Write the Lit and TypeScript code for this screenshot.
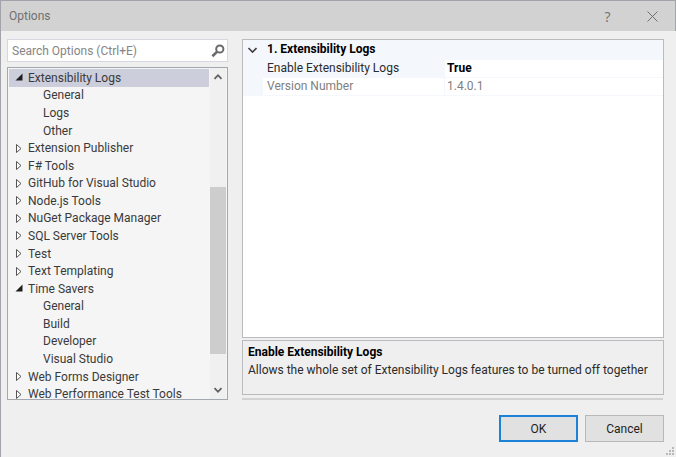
import { LitElement, html, css, svg } from "lit";
import { customElement, state } from "lit/decorators.js";
import { classMap } from "lit/directives/class-map.js";

interface TreeItem {
  label: string;
  kind: "open" | "closed" | "leaf";
}

const ITEMS: TreeItem[] = [
  { label: "Extensibility Logs", kind: "open" },
  { label: "General", kind: "leaf" },
  { label: "Logs", kind: "leaf" },
  { label: "Other", kind: "leaf" },
  { label: "Extension Publisher", kind: "closed" },
  { label: "F# Tools", kind: "closed" },
  { label: "GitHub for Visual Studio", kind: "closed" },
  { label: "Node.js Tools", kind: "closed" },
  { label: "NuGet Package Manager", kind: "closed" },
  { label: "SQL Server Tools", kind: "closed" },
  { label: "Test", kind: "closed" },
  { label: "Text Templating", kind: "closed" },
  { label: "Time Savers", kind: "open" },
  { label: "General", kind: "leaf" },
  { label: "Build", kind: "leaf" },
  { label: "Developer", kind: "leaf" },
  { label: "Visual Studio", kind: "leaf" },
  { label: "Web Forms Designer", kind: "closed" },
  { label: "Web Performance Test Tools", kind: "closed" },
];

const arrow = (kind: string) =>
  kind === "open"
    ? svg`<path d="M7.5 1.5 V8.5 H0.5 Z" fill="#1e1e1e"/>`
    : svg`<path d="M1.5 1.5 L6 5.5 L1.5 9.5 Z" fill="#fff" stroke="#555" stroke-width="1"/>`;

@customElement("options-tree")
export class OptionsTree extends LitElement {
  @state() private selected = 0;

  static styles = css`
    :host {
      display: flex;
      box-sizing: border-box;
      border: 1px solid #a3a7b0;
      background: #f5f5f5;
      overflow: hidden;
    }
    .list {
      flex: 1;
      min-width: 0;
      height: calc(100% + 4px);
      margin: 0;
      padding: 1px 0 0 1px;
      box-sizing: border-box;
      list-style: none;
      display: grid;
      grid-auto-rows: 1fr;
    }
    .item {
      display: flex;
      align-items: center;
      min-height: 0;
      line-height: 16px;
      color: #3a3a3a;
      white-space: nowrap;
      padding-left: 6px;
    }
    .leaf { padding-left: 34px; }
    .selected { background: #cccedb; }
    .arrow { width: 10px; height: 11px; margin-right: 3px; flex: none; }
    .bar {
      width: 16px;
      margin: 0 1px;
      flex: none;
      background: #f0f0f0;
      display: flex;
      flex-direction: column;
    }
    .step {
      height: 18px;
      padding: 0;
      border: 0;
      background: none;
      display: grid;
      place-items: center;
    }
    .before { flex: 101; }
    .thumb { flex: 167; background: #cdcdcd; }
    .after { flex: 27; }
  `;

  render() {
    return html`
      <ul class="list" role="tree" aria-label="Option pages">
        ${ITEMS.map(
          (item, i) => html`<li
            role="treeitem"
            aria-selected=${i === this.selected}
            class=${classMap({ item: true, leaf: item.kind === "leaf", selected: i === this.selected })}
            @click=${() => (this.selected = i)}
          >
            ${item.kind === "leaf"
              ? ""
              : html`<svg class="arrow" viewBox="0 0 10 11">${arrow(item.kind)}</svg>`}
            <span>${item.label}</span>
          </li>`
        )}
      </ul>
      <div class="bar">
        <button class="step" aria-label="Scroll up">
          <svg width="10" height="8" viewBox="0 0 10 8"><path d="M1.5 5.8 L5 2.2 L8.5 5.8" fill="none" stroke="#606060" stroke-width="1.8"/></svg>
        </button>
        <div class="before"></div>
        <div class="thumb"></div>
        <div class="after"></div>
        <button class="step" aria-label="Scroll down">
          <svg width="10" height="8" viewBox="0 0 10 8"><path d="M1.5 2.2 L5 5.8 L8.5 2.2" fill="none" stroke="#606060" stroke-width="1.8"/></svg>
        </button>
      </div>
    `;
  }
}

@customElement("property-grid")
export class PropertyGrid extends LitElement {
  static styles = css`
    :host {
      display: flex;
      flex-direction: column;
      gap: 2px;
      min-width: 0;
    }
    .sheet {
      flex: 1;
      background: #fff;
      border: 1px solid #b9bbbe;
    }
    .table {
      width: 100%;
      table-layout: fixed;
      border-collapse: separate;
      border-spacing: 0;
    }
    .gutter-col { width: 20px; }
    .name-col { width: 182px; }
    th, td {
      box-sizing: border-box;
      height: 18px;
      padding: 0 0 0 4px;
      line-height: 17px;
      text-align: left;
      font-weight: 400;
      white-space: nowrap;
      border-bottom: 1px solid #f4f7fc;
    }
    .gutter, .category { background: #f4f7fc; }
    .category { font-weight: 700; color: #000; height: 20px; }
    .name { color: #2b2b2b; border-right: 1px solid #f4f7fc; }
    .value { color: #000; padding-left: 2px; }
    .current .name { background: #f4f7fc; }
    .current .value { font-weight: 700; }
    .readonly .name, .readonly .value { color: #808080; }
    .fold { display: block; }
    .help {
      box-sizing: border-box;
      min-height: 55px;
      border: 1px solid #b9bbbe;
      padding: 2px 5px;
      color: #2b2b2b;
      line-height: 18px;
    }
    .title { margin: 0; font-size: 12px; font-weight: 700; color: #000; }
    .text { margin: 0; }
    .rule { height: 2px; margin: 1px 1px 0 0; background: #d2d2d2; }
  `;

  render() {
    return html`
      <div class="sheet">
        <table class="table">
          <colgroup>
            <col class="gutter-col" />
            <col class="name-col" />
            <col />
          </colgroup>
          <tbody>
            <tr>
              <td class="gutter">
                <svg class="fold" width="10" height="8" viewBox="0 0 10 8"><path d="M1.5 2 L5.5 6 L9.5 2" fill="none" stroke="#404040" stroke-width="1.6"/></svg>
              </td>
              <th class="category" colspan="2" scope="colgroup">1. Extensibility Logs</th>
            </tr>
            <tr class="current">
              <td class="gutter"></td>
              <th class="name" scope="row">Enable Extensibility Logs</th>
              <td class="value">True</td>
            </tr>
            <tr class="readonly">
              <td class="gutter"></td>
              <th class="name" scope="row">Version Number</th>
              <td class="value">1.4.0.1</td>
            </tr>
          </tbody>
        </table>
      </div>
      <div class="help">
        <h2 class="title">Enable Extensibility Logs</h2>
        <p class="text">Allows the whole set of Extensibility Logs features to be turned off together</p>
      </div>
      <div class="rule"></div>
    `;
  }
}

@customElement("app-root")
export class AppRoot extends LitElement {
  static styles = css`
    :host {
      display: flex;
      flex-direction: column;
      position: relative;
      box-sizing: border-box;
      min-height: 100vh;
      border-top: 1px solid #a3a3ab;
      border-left: 1px solid #a3a3ab;
      background: #efefef;
      font: 12px Roboto, "Open Sans", sans-serif;
      color: #1e1e1e;
    }
    .titlebar {
      height: 30px;
      display: flex;
      align-items: center;
      background: #d2d2d2;
      border-right: 1px solid #a3a3ab;
      padding-left: 8px;
      color: #707070;
    }
    .heading { flex: 1; margin: 0; font-size: 12px; font-weight: 400; }
    .caption {
      width: 45px;
      height: 28px;
      padding: 0;
      border: 0;
      background: none;
      display: grid;
      place-items: center;
      font: 14px "Open Sans", "Noto Sans", sans-serif;
      color: #707070;
    }
    .body {
      flex: 1;
      display: grid;
      grid-template-columns: 221px minmax(0, 1fr);
      column-gap: 14px;
      padding: 8px 12px 0 6px;
    }
    .side { display: flex; flex-direction: column; gap: 5px; }
    .search {
      display: flex;
      align-items: center;
      box-sizing: border-box;
      height: 23px;
      border: 1px solid #d5d7e3;
      background: #fff;
      padding-right: 2px;
    }
    .field {
      flex: 1;
      min-width: 0;
      border: 0;
      outline: 0;
      padding: 0 4px;
      background: none;
      font: inherit;
      color: #1e1e1e;
    }
    .field::placeholder { color: #858585; opacity: 1; }
    .find { padding: 0; border: 0; background: none; display: flex; }
    .tree { flex: 1; }
    .footer {
      display: flex;
      justify-content: flex-end;
      gap: 7px;
      padding: 15px 12px 15px 0;
    }
    .button {
      box-sizing: border-box;
      width: 79px;
      height: 27px;
      padding: 0;
      border: 1px solid #b8b8b8;
      background: #e1e1e1;
      font: inherit;
      color: #1e1e1e;
    }
    .primary { border: 2px solid #1c82d8; }
    .grip { position: absolute; right: 1px; bottom: 1px; }
  `;

  render() {
    return html`
      <header class="titlebar">
        <h1 class="heading">Options</h1>
        <button class="caption" aria-label="Help">?</button>
        <button class="caption" aria-label="Close">
          <svg width="11" height="11" viewBox="0 0 11 11"><path d="M0.5 0.5 L10.5 10.5 M10.5 0.5 L0.5 10.5" stroke="#707070" fill="none"/></svg>
        </button>
      </header>
      <main class="body">
        <div class="side">
          <div class="search">
            <input class="field" type="text" aria-label="Search Options" placeholder="Search Options (Ctrl+E)" />
            <button class="find" aria-label="Search">
              <svg width="14" height="14" viewBox="0 0 14 14">
                <circle cx="8.8" cy="5" r="3.6" fill="none" stroke="#6a6a6a" stroke-width="2"/>
                <path d="M6.2 7.6 L1.4 12.2" stroke="#6a6a6a" stroke-width="2.6"/>
              </svg>
            </button>
          </div>
          <options-tree class="tree"></options-tree>
        </div>
        <property-grid></property-grid>
      </main>
      <footer class="footer">
        <button class="button primary">OK</button>
        <button class="button">Cancel</button>
      </footer>
      <svg class="grip" width="10" height="10" viewBox="0 0 10 10" fill="#b8b8b8">
        <path d="M7 1h2v2h-2z M4 4h2v2h-2z M7 4h2v2h-2z M1 7h2v2h-2z M4 7h2v2h-2z M7 7h2v2h-2z"/>
      </svg>
    `;
  }
}
